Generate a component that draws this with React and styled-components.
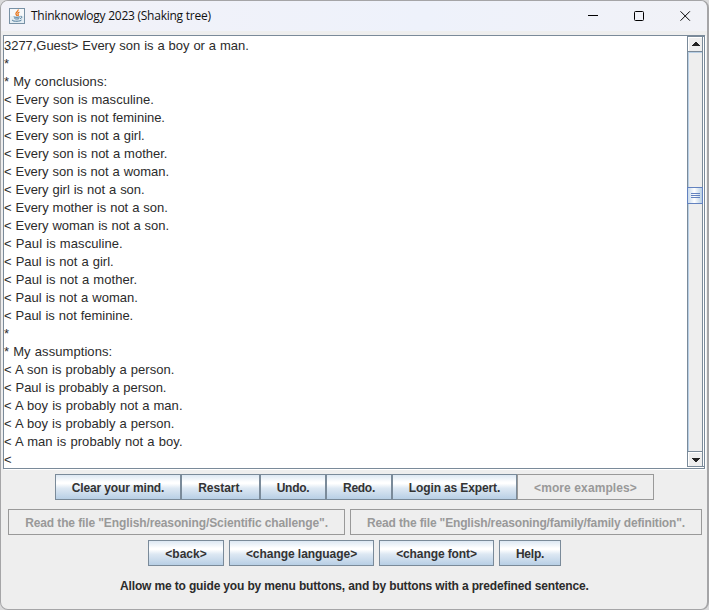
import React from "react";
import styled, { createGlobalStyle } from "styled-components";

const GlobalStyle = createGlobalStyle`
  body { margin: 0; background: #d9d9da; overflow: hidden; }
  * { box-sizing: border-box; }
`;

const Window = styled.div`
  width: 709px;
  height: 610px;
  display: flex;
  flex-direction: column;
  border: 1px solid #a5a5a7;
  border-right-width: 2px;
  border-radius: 8px;
  background: #eeeeee;
  overflow: hidden;
  color: #2b2b2b;
  font-family: "Liberation Sans", Arial, sans-serif;
`;

const TitleBar = styled.header`
  height: 30px;
  flex: none;
  display: flex;
  align-items: center;
  padding: 0 0 0 8px;
  background: linear-gradient(90deg, #f2f2f8, #eef2fb 60%, #f1f2f7);
`;

const Title = styled.h1`
  flex: 1;
  margin: 0 0 0 6px;
  font: 400 12px/16px "Open Sans", "Noto Sans", sans-serif;
  letter-spacing: -0.25px;
  color: #111111;
  white-space: nowrap;
`;

const Controls = styled.div`
  display: flex;
  padding-right: 16px;
  gap: 35px;
`;

const Control = styled.button`
  width: 11px;
  height: 28px;
  display: grid;
  place-items: center;
  padding: 0;
  border: 0;
  background: none;
`;

const Console = styled.main`
  display: flex;
  width: 702px;
  height: 434px;
  flex: none;
  margin: 4px 0 0 2px;
  border: 1px solid #7a8a99;
  box-shadow: 1px 1px 0 #ffffff;
  background: #ffffff;
`;

const Output = styled.div`
  flex: 1;
  padding-top: 1px;
  overflow: hidden;
`;

const Line = styled.p`
  margin: 0;
  height: 18px;
  font-size: 13px;
  line-height: 18px;
  white-space: pre;
  word-spacing: 0.4px;
  letter-spacing: ${(p) => p.$spacing}px;
`;

const ScrollBar = styled.div`
  width: 17px;
  height: 431px;
  display: flex;
  flex-direction: column;
  border: 1px solid #7a8a99;
  border-right: 0;
  box-shadow: inset -1px 0 0 #ffffff, inset -2px 0 0 #7a8a99;
`;

const ScrollButton = styled.div`
  width: 14px;
  height: 14px;
  flex: none;
  display: flex;
  justify-content: center;
  padding: ${(p) => p.$top}px 0 0 1px;
  border: solid #ffffff;
  border-width: 1px 0 0 1px;
  background: #eeeeee;
`;

const Track = styled.div`
  width: 14px;
  flex: 1;
  border: solid #7a8a99;
  border-width: 1px 0;
  box-shadow: inset 1px 1px 0 #b8cfe5;
  background: #eeeeee;
  padding-top: 135px;
`;

const Thumb = styled.div`
  width: 16px;
  height: 17px;
  margin-left: -1px;
  border: 1px solid #6382bf;
  background: linear-gradient(90deg, #c8daec, #ffffff 45%, #b8cfe5);
  display: flex;
  flex-direction: column;
  justify-content: center;
  align-items: center;
  gap: 1px;
`;

const Grip = styled.i`
  width: 9px;
  height: 1px;
  margin-left: 1px;
  background: #6382bf;
`;

const ButtonRow = styled.div`
  display: flex;
  flex: none;
  gap: ${(p) => p.$gap || 0}px;
  margin: ${(p) => p.$top}px 0 0 ${(p) => p.$left}px;
`;

const MetalButton = styled.button`
  width: ${(p) => p.$width}px;
  height: 26px;
  flex: none;
  padding: 1px 0 0;
  border: 1px solid #7a8a99;
  background: linear-gradient(#dde8f3 0, #ffffff 30%, #ffffff 36%, #dde8f3 55%, #b8cfe5 100%);
  color: #333333;
  font: 700 12px/22px "Liberation Sans", Arial, sans-serif;
  letter-spacing: ${(p) => p.$spacing || 0}px;
  white-space: nowrap;

  &:disabled {
    border-color: #999999;
    background: #eeeeee;
    color: #999999;
  }
`;

const Message = styled.p`
  margin: 12px 0 0 119px;
  font-size: 12px;
  font-weight: 700;
  line-height: 16px;
  letter-spacing: -0.148px;
  white-space: nowrap;
`;

const JavaIcon = () => (
  <svg width="16" height="16" viewBox="0 0 16 16" fill="none">
    <rect x=".5" y=".5" width="15" height="15" fill="#e5eef4" stroke="#7891a5" />
    <path d="M1 1h14v7H1z" fill="#f6f8fa" />
    <path d="M9.2 1.5c.5 2-3.2 2.600-2.200 4.800.3.700 1 1.200 1 1.700M10.500 4c-2 .8-1.800 1.600-1.300 2.500.3.600 0 1.100-.4 1.500" stroke="#e8761c" strokeWidth="1.300" />
    <path d="M5 8.700c-1.500.8 5 .7 6 .1M5.500 10.500c1 .7 3.500.6 4.700.1M11.500 8.300c2.200-.3 1.500 2-.4 2.300M4 11.800c-3 1.700 7.500 2 8.500.2" stroke="#4b7899" />
  </svg>
);

const Arrow = ({ down }) => (
  <svg width="8" height="4" viewBox="0 0 8 4" shapeRendering="crispEdges">
    <path d={down ? "M0 0h8v1H7v1H6v1H5v1H3V3H2V2H1V1H0z" : "M3 0h2v1h1v1h1v1h1v1H0V3h1V2h1V1h1z"} fill="#222222" />
  </svg>
);

const LINES = [
  ["3277,Guest> Every son is a boy or a man.", -0.04],
  ["*", 0],
  ["* My conclusions:", 0.07],
  ["< Every son is masculine.", 0.02],
  ["< Every son is not feminine.", -0.04],
  ["< Every son is not a girl.", -0.035],
  ["< Every son is not a mother.", -0.02],
  ["< Every son is not a woman.", -0.04],
  ["< Every girl is not a son.", -0.035],
  ["< Every mother is not a son.", -0.03],
  ["< Every woman is not a son.", -0.04],
  ["< Paul is masculine.", 0.08],
  ["< Paul is not a girl.", 0.02],
  ["< Paul is not a mother.", 0.06],
  ["< Paul is not a woman.", 0],
  ["< Paul is not feminine.", -0.03],
  ["*", 0],
  ["* My assumptions:", 0.07],
  ["< A son is probably a person.", 0.02],
  ["< Paul is probably a person.", -0.04],
  ["< A boy is probably not a man.", 0.04],
  ["< A boy is probably a person.", 0.02],
  ["< A man is probably not a boy.", 0.075],
  ["<", 0],
];

const COMMANDS = [
  { label: "Clear your mind.", width: 126, spacing: -0.14 },
  { label: "Restart.", width: 79 },
  { label: "Undo.", width: 66, spacing: -0.3 },
  { label: "Redo.", width: 66, spacing: -0.3 },
  { label: "Login as Expert.", width: 125, spacing: -0.13 },
  { label: "<more examples>", width: 137, spacing: 0.1, disabled: true },
];

const FILES = [
  { label: 'Read the file "English/reasoning/Scientific challenge".', width: 337, spacing: -0.11, disabled: true },
  { label: 'Read the file "English/reasoning/family/family definition".', width: 352, spacing: -0.15, disabled: true },
];

const OPTIONS = [
  { label: "<back>", width: 76 },
  { label: "<change language>", width: 145, spacing: -0.05 },
  { label: "<change font>", width: 115, spacing: -0.1 },
  { label: "Help.", width: 62, spacing: -0.25 },
];

const Buttons = ({ items, ...row }) => (
  <ButtonRow {...row}>
    {items.map((b) => (
      <MetalButton key={b.label} $width={b.width} $spacing={b.spacing} disabled={b.disabled}>
        {b.label}
      </MetalButton>
    ))}
  </ButtonRow>
);

export default function App() {
  return (
    <>
      <GlobalStyle />
      <Window>
        <TitleBar>
          <JavaIcon />
          <Title>Thinknowlogy 2023 (Shaking tree)</Title>
          <Controls>
            <Control aria-label="Minimize">
              <svg width="11" height="10"><path d="M0 4.500h10" stroke="#000" /></svg>
            </Control>
            <Control aria-label="Maximize">
              <svg width="11" height="10"><rect x=".5" y=".5" width="9" height="9" rx="1" fill="none" stroke="#000" /></svg>
            </Control>
            <Control aria-label="Close">
              <svg width="11" height="10"><path d="M.5.3l9.400 9.400M9.900.3L.5 9.700" stroke="#000" /></svg>
            </Control>
          </Controls>
        </TitleBar>
        <Console>
          <Output>
            {LINES.map(([text, spacing], i) => (
              <Line key={i} $spacing={spacing}>{text}</Line>
            ))}
          </Output>
          <ScrollBar>
            <ScrollButton $top={4}><Arrow /></ScrollButton>
            <Track>
              <Thumb><Grip /><Grip /><Grip /></Thumb>
            </Track>
            <ScrollButton $top={5}><Arrow down /></ScrollButton>
          </ScrollBar>
        </Console>
        <Buttons items={COMMANDS} $top={5} $left={54} />
        <Buttons items={FILES} $top={9} $left={7} $gap={5} />
        <Buttons items={OPTIONS} $top={5} $left={147} $gap={5} />
        <Message>Allow me to guide you by menu buttons, and by buttons with a predefined sentence.</Message>
      </Window>
    </>
  );
}
